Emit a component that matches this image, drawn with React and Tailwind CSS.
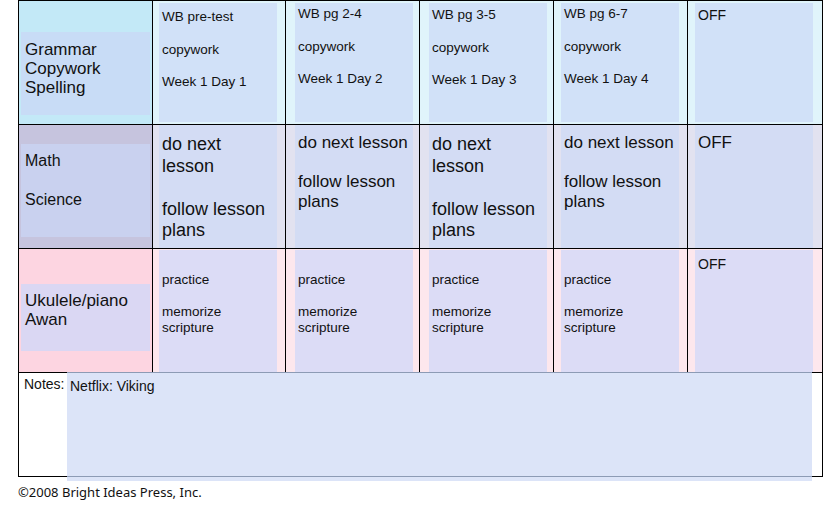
import React from "react";

// one week of the planner, rows by subject
const rows = [
  {
    label: ["Grammar", "Copywork", "Spelling"],
    labelBreaks: false,
    outer: "bg-[#c3e9f7]",
    labelInner: "bg-[#c8dcf6] mt-[31px] h-[83px] pt-[8px] text-[17px] leading-[19px]",
    dayOuter: "bg-[#e0f4fb]",
    dayInner: "bg-[#d1e1f8] mt-[2px] h-[119px] text-[13.5px] leading-[16px]",
    gap: "mt-[16.5px]",
    days: [
      { pad: "pt-[6px]", lines: ["WB pre-test", "copywork", "Week 1 Day 1"] },
      { pad: "pt-[3px]", lines: ["WB pg 2-4", "copywork", "Week 1 Day 2"] },
      { pad: "pt-[4px]", lines: ["WB pg 3-5", "copywork", "Week 1 Day 3"] },
      { pad: "pt-[3px]", lines: ["WB pg 6-7", "copywork", "Week 1 Day 4"] },
      { pad: "pt-[4px] text-[14px]", lines: ["OFF"] },
    ],
  },
  {
    label: ["Math", "Science"],
    labelBreaks: true,
    outer: "bg-[#c6c4de]",
    labelInner: "bg-[#c9d1ef] mt-[19px] h-[93px] pt-[7px] text-[16px] leading-[19.5px]",
    dayOuter: "bg-[#e2e2f0]",
    dayInner: "bg-[#d3dcf4] h-[123px]",
    gap: "",
    days: [
      { pad: "pt-[9px] text-[18px] leading-[21.5px]", lines: ["do next lesson", "follow lesson plans"], gap: "mt-[21.5px]" },
      { pad: "pt-[8px] text-[17px] leading-[19.5px]", lines: ["do next lesson", "follow lesson plans"], gap: "mt-[19.5px]" },
      { pad: "pt-[9px] text-[18px] leading-[21.5px]", lines: ["do next lesson", "follow lesson plans"], gap: "mt-[21.5px]" },
      { pad: "pt-[8px] text-[17px] leading-[19.5px]", lines: ["do next lesson", "follow lesson plans"], gap: "mt-[19.5px]" },
      { pad: "pt-[8px] text-[17px] leading-[19.5px]", lines: ["OFF"] },
    ],
  },
  {
    label: ["Ukulele/piano", "Awan"],
    labelBreaks: false,
    outer: "bg-[#fdd5e1]",
    labelInner: "bg-[#dad7f3] mt-[35px] h-[67px] pt-[7px] text-[17px] leading-[19px]",
    dayOuter: "bg-[#fde7ed]",
    dayInner: "bg-[#dcdcf6] mt-[1px] h-[122px] text-[13.5px] leading-[16px]",
    gap: "mt-[16px]",
    days: [
      { pad: "pt-[22px]", lines: ["practice", "memorize scripture"] },
      { pad: "pt-[22px]", lines: ["practice", "memorize scripture"] },
      { pad: "pt-[22px]", lines: ["practice", "memorize scripture"] },
      { pad: "pt-[22px]", lines: ["practice", "memorize scripture"] },
      { pad: "pt-[6px] text-[14px]", lines: ["OFF"] },
    ],
  },
];

// inner box offsets inside each day column
const dayInset = ["ml-[6px]", "ml-[9px]", "ml-[9px]", "ml-[7px]", "ml-[7px]"];

const Label = ({ row }) => (
  <div className={`${row.outer} border-r border-black px-[2px]`}>
    <div className={`${row.labelInner} pl-[4px]`}>
      {row.labelBreaks
        ? row.label.map((t, i) => (
            <p key={t} className={i > 0 ? "mt-[19.5px]" : ""}>
              {t}
            </p>
          ))
        : row.label.map((t) => <p key={t}>{t}</p>)}
    </div>
  </div>
);

const Day = ({ row, day, index }) => (
  <div className={`${row.dayOuter} border-r border-black`}>
    <div className={`${row.dayInner} ${dayInset[index]} w-[118px] pl-[3px] pr-[2px] ${day.pad}`}>
      {day.lines.map((t, i) => (
        <p key={t} className={i > 0 ? day.gap || row.gap : ""}>
          {t}
        </p>
      ))}
    </div>
  </div>
);

export default function App() {
  return (
    <div className="w-[835px] h-[514px] bg-white pl-[18px] text-[#111] font-['Liberation_Sans',Arial,sans-serif]">
      <div className="w-[805px] border-l border-t border-black">
        {rows.map((row, r) => (
          <div
            key={r}
            className="grid grid-cols-[134px_133px_134px_134px_134px_135px] h-[124px] border-b border-black"
          >
            <Label row={row} />
            {row.days.map((day, i) => (
              <Day key={i} row={row} day={day} index={i} />
            ))}
          </div>
        ))}

        {/* notes */}
        <div className="flex h-[104px] border-b border-r border-black">
          <div className="w-[48px] pl-[5px] pt-[3px] text-[14px] leading-[16px]">Notes:</div>
          <div className="relative z-10 -mt-[1px] mb-[-1px] mr-[10px] flex-1 bg-[#dce4f8] border-t border-b border-[#8d9bb5] shadow-[0_4px_0_#dce4f8] pl-[3px] pt-[5px] text-[14px] leading-[16px]">
            Netflix: Viking
          </div>
        </div>
      </div>

      <p className="mt-[7px] text-[13px] leading-[16px] font-['Noto_Sans',sans-serif]">
        ©2008 Bright Ideas Press, Inc.
      </p>
    </div>
  );
}
